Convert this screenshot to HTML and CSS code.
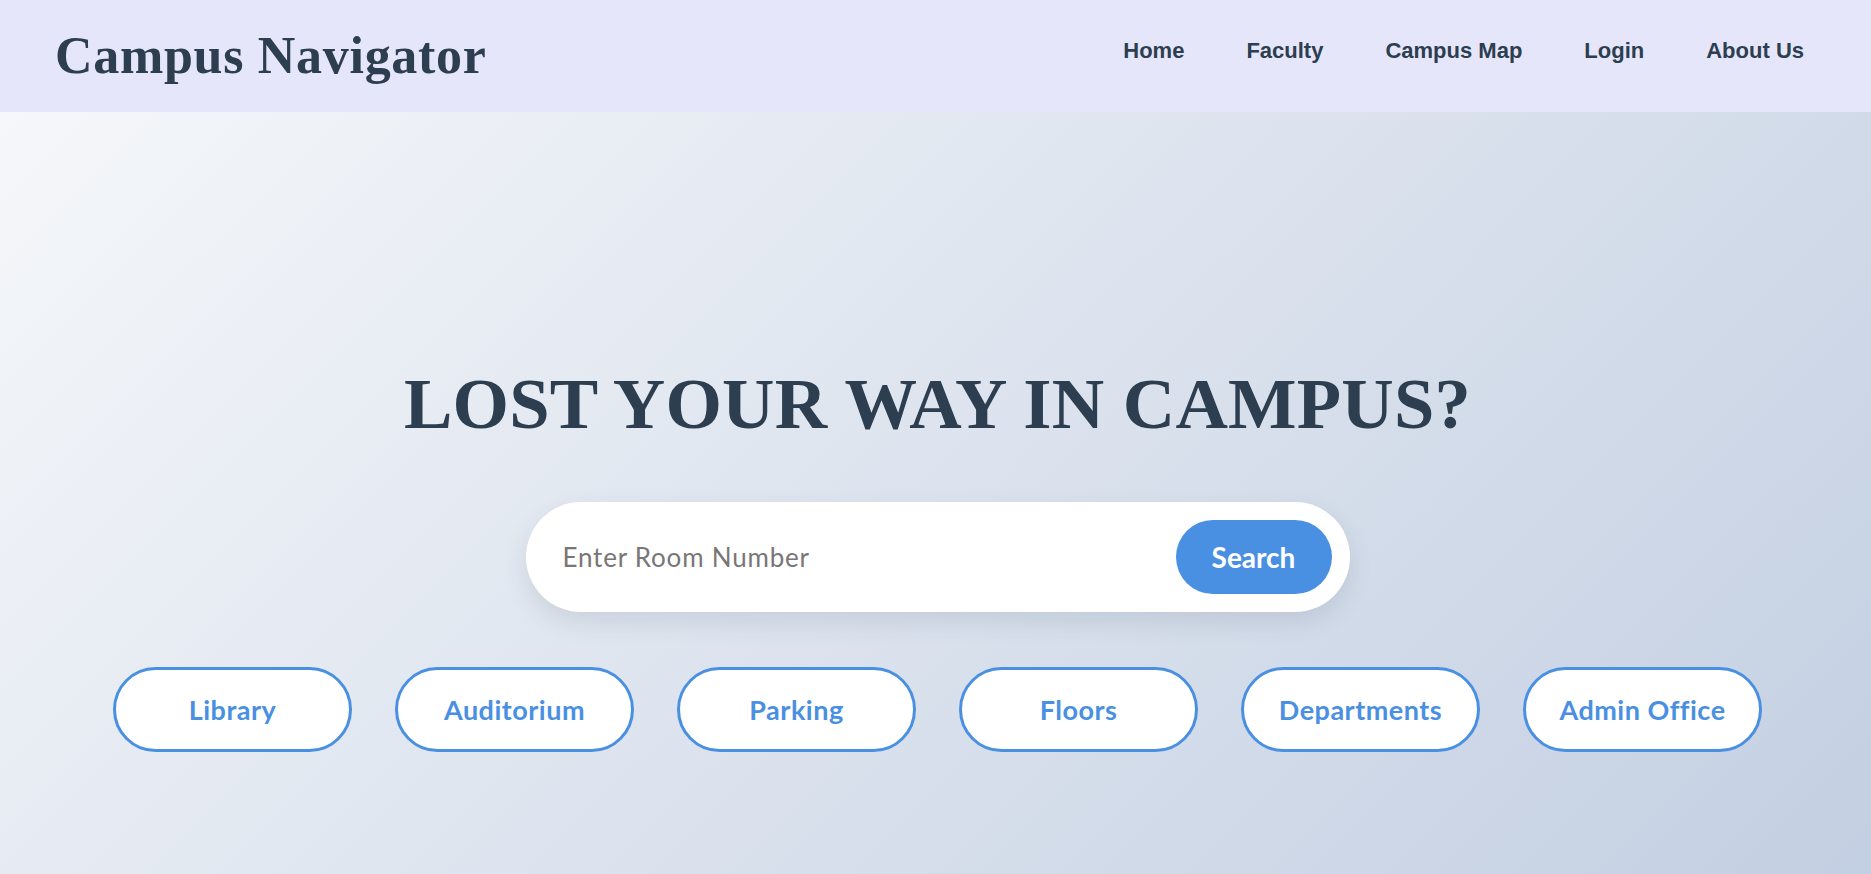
FILE: index.html
```html
<!DOCTYPE html>
<html lang="en">
<head>
<meta charset="utf-8">
<title>Campus Navigator</title>
<link rel="stylesheet" href="styles.css">
</head>
<body>
<header class="site-header">
  <div class="logo">Campus Navigator</div>
  <nav class="main-nav">
    <a href="#" class="nav-link">Home</a>
    <a href="#" class="nav-link">Faculty</a>
    <a href="#" class="nav-link">Campus Map</a>
    <a href="#" class="nav-link">Login</a>
    <a href="#" class="nav-link">About Us</a>
  </nav>
</header>
<main class="hero">
  <h1 class="hero-title">LOST YOUR WAY IN CAMPUS?</h1>
  <form class="search-box" onsubmit="return false;">
    <input class="search-input" type="text" placeholder="Enter Room Number">
    <button class="search-button" type="submit">Search</button>
  </form>
  <div class="quick-links">
    <a href="#" class="pill">Library</a>
    <a href="#" class="pill">Auditorium</a>
    <a href="#" class="pill">Parking</a>
    <a href="#" class="pill">Floors</a>
    <a href="#" class="pill">Departments</a>
    <a href="#" class="pill">Admin Office</a>
  </div>
</main>
</body>
</html>
```
FILE: styles.css
```css
* {
  box-sizing: border-box;
}

html, body {
  margin: 0;
  padding: 0;
}

body {
  font-family: "Liberation Sans", Arial, sans-serif;
  color: #2c3e50;
  background: #dfe5ef;
  overflow: hidden;
}

.site-header {
  height: 112px;
  background: #e6e6fa;
  display: flex;
  align-items: center;
  justify-content: space-between;
  padding: 0 67px 0 55px;
}

.logo {
  font-family: "Liberation Serif", "Times New Roman", serif;
  font-weight: 700;
  font-size: 52px;
  letter-spacing: 0.7px;
  color: #2c3e50;
  line-height: 1.1;
}

.main-nav {
  display: flex;
  gap: 62px;
  padding-bottom: 11px;
}

.nav-link {
  font-family: "Liberation Sans", Arial, sans-serif;
  font-weight: 700;
  font-size: 22px;
  color: #2c3e50;
  text-decoration: none;
}

.hero {
  min-height: calc(100vh - 112px);
  background: linear-gradient(135deg, #f5f7fa 0%, #c3cfe2 100%);
  display: flex;
  flex-direction: column;
  align-items: center;
  padding: 249px 0 0 4px;
}

.hero-title {
  margin: 0;
  font-family: "Liberation Serif", "Times New Roman", serif;
  font-weight: 700;
  font-size: 72.6px;
  line-height: 86px;
  color: #2c3e50;
  letter-spacing: 0.2px;
}

.search-box {
  margin: 55px 0 0;
  width: 824px;
  height: 110px;
  padding: 18px;
  background: #ffffff;
  border-radius: 55px;
  display: flex;
  align-items: center;
  box-shadow: 0 10px 25px rgba(44, 62, 80, 0.12);
}

.search-input {
  flex: 1;
  border: none;
  outline: none;
  background: transparent;
  padding: 0 0 0 19px;
  font-family: Lato, "Open Sans", sans-serif;
  font-size: 26px;
  letter-spacing: 0.8px;
  color: #333;
}

.search-input::placeholder {
  color: #7a7676;
}

.search-button {
  width: 156px;
  height: 74px;
  border: none;
  border-radius: 37px;
  background: #4a90e2;
  color: #ffffff;
  font-family: Lato, "Open Sans", sans-serif;
  font-weight: 700;
  font-size: 28px;
  cursor: pointer;
}

.quick-links {
  margin-top: 55px;
  display: flex;
  gap: 43px;
}

.pill {
  width: 239px;
  height: 85px;
  border: 3px solid #4a90e2;
  border-radius: 43px;
  background: #ffffff;
  display: flex;
  align-items: center;
  justify-content: center;
  color: #4a90e2;
  font-family: Lato, "Open Sans", sans-serif;
  font-weight: 700;
  font-size: 27px;
  letter-spacing: 0.5px;
  text-decoration: none;
}
```
